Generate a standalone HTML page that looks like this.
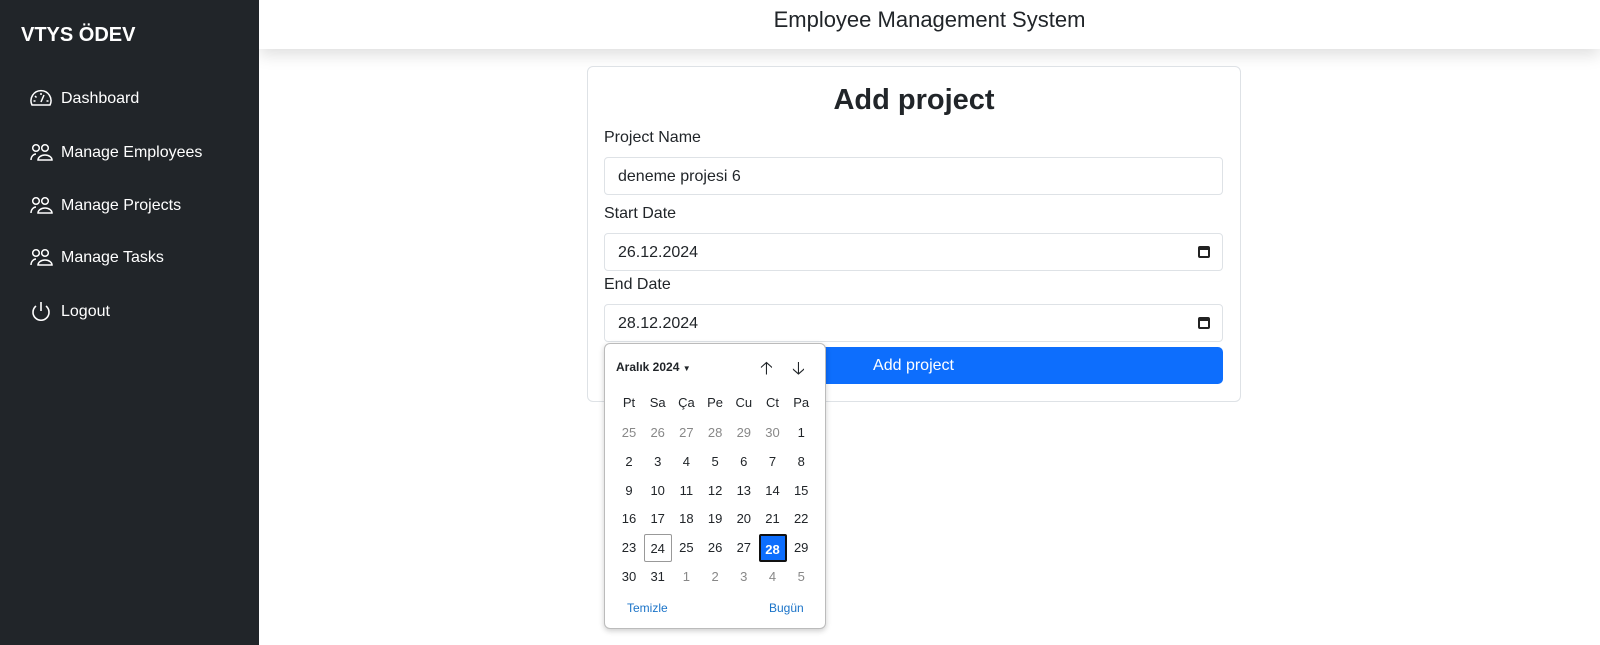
<!DOCTYPE html>
<html><head><meta charset="utf-8"><style>
*{box-sizing:border-box;margin:0;padding:0}
body{width:1600px;height:645px;overflow:hidden;font-family:"Liberation Sans",sans-serif;background:#fff;position:relative;color:#212529}
.side{position:absolute;left:0;top:0;width:259px;height:645px;background:#212529;color:#fff;z-index:2}
.brand{position:absolute;left:21px;top:24px;font-size:20px;font-weight:bold}
.nav{position:absolute;left:29px;font-size:16px;display:flex;align-items:center}
.nav svg{margin-right:8px}
.top{position:absolute;left:259px;top:0;right:0;height:49px;background:#fff;box-shadow:0 6px 16px rgba(0,0,0,.13);text-align:center;font-size:22px;line-height:40px}
.card{position:absolute;left:587px;top:66px;width:654px;height:336px;background:#fff;border:1px solid #dee2e6;border-radius:6px}
h1{position:absolute;left:587px;width:654px;top:84px;text-align:center;font-size:29px;font-weight:bold}
.lbl{position:absolute;left:604px;font-size:16px}
.inp{position:absolute;left:604px;width:619px;height:38px;border:1px solid #dee2e6;border-radius:4px;background:#fff;font-size:16px;padding-left:13px;line-height:37px}
.cal{position:absolute;right:12px;top:12px;width:12px;height:12px;border:2px solid #222;border-top-width:4px;border-radius:2px}
.btn{position:absolute;left:604px;top:347px;width:619px;height:37px;background:#0d6efd;border-radius:5px;color:#fff;font-size:16px;text-align:center;line-height:37px}
.pop{position:absolute;left:604px;top:343px;width:222px;height:286px;background:#fff;border:1px solid #bbb;border-radius:6px;box-shadow:0 2px 6px rgba(0,0,0,.2);font-size:13px}
.c{position:absolute;width:28px;height:28px;line-height:28px;text-align:center}
.g{color:#888}
</style></head><body>
<div class="side">
<div class="brand">VTYS ÖDEV</div>
<div class="nav" style="top:89px"><svg width="24" height="20" viewBox="0 0 24 20" fill="none" stroke="#fff" stroke-width="1.5"><path d="M3 16A10 10 0 1 1 21 16Z"/><path d="M12 13L15 6"/><path d="M12 4v2M6 7l1.5 1.5M4.5 12h2M19.5 12h-2"/></svg>Dashboard</div>
<div class="nav" style="top:143px"><svg width="24" height="20" viewBox="0 0 24 20" fill="none" stroke="#fff" stroke-width="1.5"><circle cx="7" cy="5" r="3.3"/><circle cx="16" cy="5" r="3.3"/><path d="M2 17c0-4 3-6 5-6M9 17a7 5 0 0 1 14 0Z"/></svg>Manage Employees</div>
<div class="nav" style="top:196px"><svg width="24" height="20" viewBox="0 0 24 20" fill="none" stroke="#fff" stroke-width="1.5"><circle cx="7" cy="5" r="3.3"/><circle cx="16" cy="5" r="3.3"/><path d="M2 17c0-4 3-6 5-6M9 17a7 5 0 0 1 14 0Z"/></svg>Manage Projects</div>
<div class="nav" style="top:248px"><svg width="24" height="20" viewBox="0 0 24 20" fill="none" stroke="#fff" stroke-width="1.5"><circle cx="7" cy="5" r="3.3"/><circle cx="16" cy="5" r="3.3"/><path d="M2 17c0-4 3-6 5-6M9 17a7 5 0 0 1 14 0Z"/></svg>Manage Tasks</div>
<div class="nav" style="top:301px"><svg width="24" height="22" viewBox="0 0 24 22" fill="none" stroke="#fff" stroke-width="1.6"><path d="M12 1v9"/><path d="M7 5a8 8 0 1 0 10 0"/></svg>Logout</div>
</div>
<div class="top">Employee Management System</div>
<div class="card"></div>
<h1>Add project</h1>
<div class="lbl" style="top:129px">Project Name</div>
<div class="inp" style="top:157px">deneme projesi 6</div>
<div class="lbl" style="top:205px">Start Date</div>
<div class="inp" style="top:233px">26.12.2024<span class="cal"></span></div>
<div class="lbl" style="top:276px">End Date</div>
<div class="inp" style="top:304px">28.12.2024<span class="cal"></span></div>
<div class="btn">Add project</div>
<div class="pop">
<div style="position:absolute;left:11px;top:16px;font-weight:bold;font-size:12px">Aralık 2024 <span style="font-size:8px">▼</span></div>
<div style="position:absolute;left:155px;top:12px;font-size:18px">🡡</div>
<div style="position:absolute;left:187px;top:12px;font-size:18px">🡣</div>
<div id="g"></div>
<div style="position:absolute;left:22px;top:257px;color:#1a73c8;font-size:12px">Temizle</div>
<div style="position:absolute;left:164px;top:257px;color:#1a73c8;font-size:12px">Bugün</div>
</div>
<script>
var h=["Pt","Sa","Ça","Pe","Cu","Ct","Pa"],d=[25,26,27,28,29,30,1];
for(var i=2;i<=31;i++)d.push(i);d=d.concat([1,2,3,4,5]);
var s="";
h.forEach(function(t,i){s+='<div class="c" style="left:'+(10+i*28.7)+'px;top:45px">'+t+'</div>'});
d.forEach(function(t,i){var r=Math.floor(i/7),c=i%7,cls="c",st="";
if(i<6||i>36)cls+=" g";
if(t==24&&r==4)st="border:1px solid #999;border-radius:2px;";
if(t==28&&r==4)st="background:#0d6efd;color:#fff;font-weight:bold;border:2px solid #111;border-radius:2px;";
s+='<div class="'+cls+'" style="'+st+'left:'+(10+c*28.7)+'px;top:'+(75+r*28.8)+'px">'+t+'</div>'});
document.getElementById("g").innerHTML=s;
</script>
</body></html>
